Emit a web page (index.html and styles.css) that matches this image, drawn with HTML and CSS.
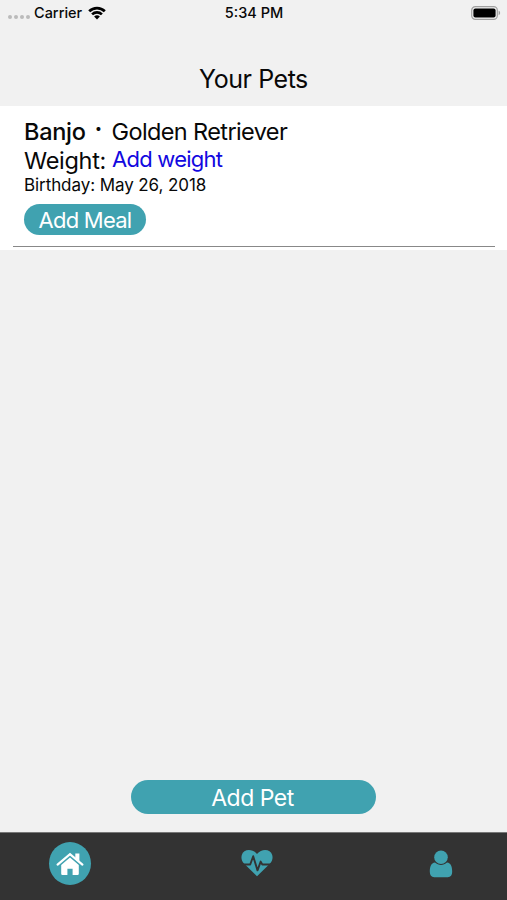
FILE: index.html
```
<!DOCTYPE html>
<html lang="en">
<head>
  <meta charset="UTF-8">
  <meta name="viewport" content="width=device-width, initial-scale=1.0">
  <title>Your Pets</title>
  <link rel="stylesheet" href="styles.css">
</head>
<body>
  <div class="status-bar">
    <div class="carrier">
      <span class="signal"><i></i><i></i><i></i><i></i></span>
      <span class="carrier-name">Carrier</span>
      <svg class="wifi" width="18" height="14" viewBox="0 0 18 14">
        <path d="M1.2 5.2a11.2 11.2 0 0 1 15.6 0" fill="none" stroke="#000" stroke-width="2.8"/>
        <path d="M4.1 8.4a7 7 0 0 1 9.8 0" fill="none" stroke="#000" stroke-width="2.6"/>
        <path d="M9 13.6l-2.9-3a4.2 4.2 0 0 1 5.8 0z"/>
      </svg>
    </div>
    <span class="clock">5:34 PM</span>
    <svg class="battery" width="30" height="14" viewBox="0 0 30 14">
      <rect x="0.7" y="0.7" width="25.6" height="12.6" rx="3.6" fill="none" stroke="#a0a0a0" stroke-width="1.2"/>
      <rect x="2.4" y="2.4" width="22.2" height="9.2" rx="2"/>
      <path d="M27.6 4.8c2 .6 2 3.8 0 4.4z" fill="#a0a0a0"/>
    </svg>
  </div>

  <header>
    <h1>Your Pets</h1>
  </header>

  <main>
    <div class="pet">
      <div class="pet-name"><b>Banjo</b><span class="dot">·</span><span class="breed">Golden Retriever</span></div>
      <div class="weight"><span class="weight-label">Weight:</span><a class="add-weight">Add weight</a></div>
      <div class="birthday">Birthday: May 26, 2018</div>
      <button class="add-meal">Add Meal</button>
    </div>
  </main>

  <button class="add-pet">Add Pet</button>

  <nav>
    <a class="tab active">
      <svg width="28" height="24" viewBox="0 0 28 24" fill="#fff">
        <path d="M14 5.6l8.8 7.4v8.8a1.2 1.2 0 0 1-1.2 1.2h-5v-6.2h-5.200V23h-5a1.2 1.2 0 0 1-1.2-1.2V13z"/>
        <path d="M1.6 12.6L14 2.2l12.4 10.4" fill="none" stroke="#fff" stroke-width="2.2" stroke-linecap="round"/>
        <path d="M19.3 1.4h4.1v8.200l-4.1-3.5z"/>
      </svg>
    </a>
    <a class="tab heart">
      <svg width="32" height="28" viewBox="0 0 32 28">
        <path d="M16 27.2L3.2 14.8C.5 12 0 9 .8 6 2.4.2 11-.9 16 5c5-5.900 13.600-4.800 15.200 1 .8 3 .3 6-2.400 8.800z" fill="#40a2b0"/>
        <path d="M0 15.5h9.2l3-8.3 4.3 14.2 3.2-8.8 1.6 2.9H32" fill="none" stroke="#333" stroke-width="1.9" stroke-linejoin="round"/>
      </svg>
    </a>
    <a class="tab">
      <svg width="24" height="28" viewBox="0 0 24 28" fill="#40a2b0">
        <circle cx="12" cy="7.2" r="6.8"/>
        <path d="M6 12.6c3.5 3.2 8.5 3.2 12 0 4 .3 5.2 4.4 5.2 9.2 0 3.4-1.6 5.4-4.4 5.4H5.2C2.4 27.2.8 25.2.8 21.800c0-4.800 1.200-8.900 5.200-9.200z"/>
      </svg>
    </a>
  </nav>
</body>
</html>
```

FILE: styles.css
```
* {
  box-sizing: border-box;
}

body {
  font-family: Inter, "Liberation Sans", sans-serif;
  margin: 0;
  height: 900px;
  display: flex;
  flex-direction: column;
  background-color: #f1f1f1;
  color: #080808;
}

.status-bar {
  display: grid;
  grid-template-columns: 1fr auto 1fr;
  align-items: center;
  height: 26px;
  padding: 0 6px 0 8px;
  font-size: 14.5px;
  font-weight: 500;
}

.carrier {
  display: flex;
  align-items: center;
}

.signal {
  display: flex;
  gap: 2px;
  margin: 8px 4px 0 0;
}

.signal i {
  width: 4px;
  height: 4px;
  border-radius: 50%;
  background-color: #bbb;
}

.carrier-name {
  margin-bottom: 2px;
}

.wifi {
  margin-left: 6px;
}

.clock {
  margin: 0 1px 2px 0;
}

.battery {
  justify-self: end;
}

header {
  height: 80px;
  padding-top: 38px;
  text-align: center;
}

h1 {
  margin: 0;
  font-size: 25px;
  line-height: 30px;
  font-weight: 400;
  letter-spacing: -0.45px;
}

.pet {
  height: 144px;
  padding: 11px 24px 0;
  background-color: #fff;
  position: relative;
}

.pet::after {
  content: "";
  position: absolute;
  left: 13px;
  right: 12px;
  bottom: 3px;
  height: 1px;
  background-color: #888;
}

.pet-name,
.weight {
  display: flex;
  font-size: 23.5px;
  line-height: 29px;
}

.pet-name b {
  font-weight: 500;
  letter-spacing: -0.3px;
}

.dot {
  width: 26px;
  text-align: center;
  font-weight: 700;
  margin-top: -3px;
}

.breed {
  letter-spacing: -0.62px;
}

.weight-label {
  letter-spacing: -0.3px;
}

.add-weight {
  color: #1208e0;
  font-size: 22px;
  line-height: 27px;
  margin-left: 6px;
  letter-spacing: -0.75px;
}

.birthday {
  font-size: 17px;
  line-height: 21px;
  letter-spacing: -0.08px;
}

button {
  display: block;
  border: none;
  padding: 0;
  background-color: #40a2b0;
  color: #fff;
  font-family: inherit;
}

.add-meal {
  width: 122px;
  height: 31px;
  margin-top: 8px;
  padding-top: 1px;
  border-radius: 16px;
  font-size: 22px;
  line-height: 30px;
  letter-spacing: -0.75px;
}

.add-pet {
  width: 245px;
  height: 34px;
  margin: auto auto 18px 131px;
  padding: 2px 2px 0 0;
  border-radius: 17px;
  font-size: 23px;
  line-height: 32px;
  letter-spacing: -0.5px;
}

nav {
  display: flex;
  justify-content: space-between;
  height: 68px;
  padding: 9px 54px 0 49px;
  border-top: 1px solid #777;
  background-color: #333;
}

.tab {
  display: flex;
  align-items: center;
  justify-content: center;
  height: 43px;
}

.heart {
  height: 42px;
  margin-right: 6px;
}

.active {
  width: 42px;
  border-radius: 50%;
  background-color: #40a2b0;
}
```
